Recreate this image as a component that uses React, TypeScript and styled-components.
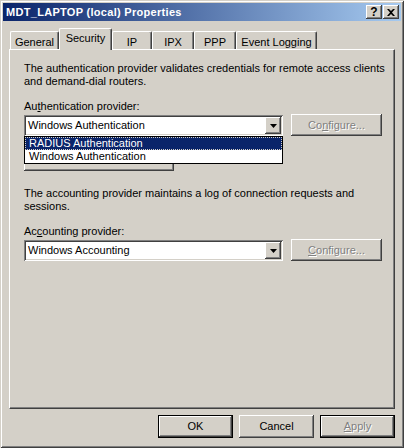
import { createGlobalStyle, styled } from "styled-components";

const GlobalStyle = createGlobalStyle`
  html, body {
    margin: 0;
    padding: 0;
    background: #d4d0c8;
  }
  body {
    font-family: "Liberation Sans", Arial, sans-serif;
    font-size: 11px;
    line-height: 13px;
    color: #000;
  }
`;

const raised = `
  box-shadow: inset -1px -1px #404040, inset 1px 1px #fff,
    inset -2px -2px #808080, inset 2px 2px #d4d0c8;
`;

const Window = styled.div`
  width: 404px;
  height: 448px;
  box-sizing: border-box;
  padding: 3px;
  background: #d4d0c8;
  box-shadow: inset 1px 1px #d4d0c8, inset -1px -1px #404040,
    inset 2px 2px #fff, inset -2px -2px #808080;
  display: flex;
  flex-direction: column;
`;

const TitleBar = styled.div`
  height: 18px;
  display: flex;
  align-items: center;
  padding: 0 2px 0 2px;
  background: linear-gradient(to right, #0a246a, #a6caf0);
  color: #fff;
  font-weight: bold;
`;

const TitleText = styled.span`
  flex: 1;
  padding-left: 1px;
  letter-spacing: 0.3px;
  white-space: nowrap;
`;

const TitleButton = styled.div`
  width: 16px;
  height: 14px;
  box-sizing: border-box;
  margin-left: 1px;
  background: #d4d0c8;
  ${raised}
  color: #000;
  display: flex;
  align-items: center;
  justify-content: center;
  font-weight: bold;
  font-size: 12px;
`;

const Content = styled.div`
  padding: 0 6px;
  display: flex;
  flex-direction: column;
`;

const TabRow = styled.div`
  margin-top: 7px;
  height: 21px;
  padding-left: 1px;
  display: flex;
  align-items: flex-end;
  position: relative;
  z-index: 1;
`;

const Tab = styled.div<{ $width: number; $selected?: boolean }>`
  width: ${(p) => p.$width}px;
  height: ${(p) => (p.$selected ? 22 : 18)}px;
  margin-bottom: ${(p) => (p.$selected ? -1 : 0)}px;
  box-sizing: border-box;
  padding-top: ${(p) => (p.$selected ? 3 : 4)}px;
  text-align: center;
  background: #d4d0c8;
  border-top: 1px solid #fff;
  border-left: 1px solid #fff;
  border-right: 1px solid #404040;
  border-radius: 2px 2px 0 0;
  box-shadow: inset -1px 0 #808080;
  white-space: nowrap;
`;

const Panel = styled.div`
  height: 360px;
  box-sizing: border-box;
  padding: 12px 0 0 14px;
  border-top: 1px solid #fff;
  border-left: 1px solid #fff;
  border-right: 1px solid #404040;
  border-bottom: 1px solid #404040;
  box-shadow: inset -1px -1px #808080;
  display: flex;
  flex-direction: column;
`;

const Description = styled.p<{ $gap?: number }>`
  margin: ${(p) => p.$gap ?? 0}px 0 0 0;
  width: 365px;
`;

const Label = styled.div<{ $gap?: number }>`
  margin-top: ${(p) => p.$gap ?? 12}px;
  margin-bottom: 1px;
`;

const Key = styled.span`
  text-decoration: underline;
`;

const FieldRow = styled.div`
  display: flex;
  align-items: flex-start;
  gap: 8px;
`;

const ComboWrap = styled.div`
  position: relative;
  margin-top: 1px;
  z-index: 2;
`;

const Combo = styled.div`
  width: 259px;
  height: 21px;
  box-sizing: border-box;
  background: #fff;
  box-shadow: inset 1px 1px #808080, inset -1px -1px #fff,
    inset 2px 2px #404040, inset -2px -2px #d4d0c8;
  display: flex;
  align-items: center;
  padding: 0 2px 0 4px;
`;

const ComboText = styled.span`
  flex: 1;
`;

const ArrowButton = styled.div`
  width: 16px;
  height: 17px;
  box-sizing: border-box;
  background: #d4d0c8;
  ${raised}
  display: flex;
  align-items: center;
  justify-content: center;
`;

const DropList = styled.div`
  position: absolute;
  top: 100%;
  left: 0;
  width: 259px;
  box-sizing: border-box;
  border: 1px solid #000;
  background: #fff;
`;

const ListItem = styled.div<{ $active?: boolean }>`
  height: 13px;
  box-sizing: border-box;
  padding-left: 3px;
  background: ${(p) => (p.$active ? "#0a246a" : "#fff")};
  color: ${(p) => (p.$active ? "#fff" : "#000")};
  border: 1px dotted ${(p) => (p.$active ? "#d4d0c8" : "transparent")};
  line-height: 11px;
  white-space: nowrap;
`;

const Button = styled.div<{
  $width: number;
  $disabled?: boolean;
  $framed?: boolean;
}>`
  width: ${(p) => p.$width}px;
  height: ${(p) => (p.$framed ? 23 : 22)}px;
  box-sizing: border-box;
  background: #d4d0c8;
  border: ${(p) => (p.$framed ? "1px solid #000" : "none")};
  ${raised}
  display: flex;
  align-items: center;
  justify-content: center;
  color: ${(p) => (p.$disabled ? "#808080" : "#000")};
  text-shadow: ${(p) => (p.$disabled ? "1px 1px 0 #fff" : "none")};
  white-space: nowrap;
`;

// mostly covered by the open drop-down list
const HiddenButton = styled(Button)`
  margin-top: 12px;
  height: 23px;
`;

const FooterButton = styled(Button)`
  height: 23px;
`;

const Footer = styled.div`
  margin-top: 6px;
  display: flex;
  justify-content: flex-end;
  gap: 6px;
`;

const tabs = [
  { label: "General", width: 49 },
  { label: "Security", width: 53, selected: true },
  { label: "IP", width: 40 },
  { label: "IPX", width: 42 },
  { label: "PPP", width: 42 },
  { label: "Event Logging", width: 81 },
];

const DownArrow = () => (
  <svg width="7" height="4" viewBox="0 0 7 4">
    <path d="M0 0h7L3.5 4z" fill="#000" />
  </svg>
);

const CloseGlyph = () => (
  <svg width="8" height="7" viewBox="0 0 8 7">
    <path
      d="M0 0h2l2 2 2-2h2L5 3.5 8 7H6L4 5 2 7H0l3-3.5z"
      fill="#000"
    />
  </svg>
);

const App = () => {
  return (
    <Window>
      <GlobalStyle />
      <TitleBar>
        <TitleText>MDT_LAPTOP (local) Properties</TitleText>
        <TitleButton>?</TitleButton>
        <TitleButton>
          <CloseGlyph />
        </TitleButton>
      </TitleBar>
      <Content>
        <TabRow>
          {tabs.map((t) => (
            <Tab key={t.label} $width={t.width} $selected={t.selected}>
              {t.label}
            </Tab>
          ))}
        </TabRow>
        <Panel>
          <Description>
            The authentication provider validates credentials for remote access
            clients and demand-dial routers.
          </Description>
          <Label>
            Au<Key>t</Key>hentication provider:
          </Label>
          <FieldRow>
            <ComboWrap>
              <Combo>
                <ComboText>Windows Authentication</ComboText>
                <ArrowButton>
                  <DownArrow />
                </ArrowButton>
              </Combo>
              <DropList>
                <ListItem $active>RADIUS Authentication</ListItem>
                <ListItem>Windows Authentication</ListItem>
              </DropList>
            </ComboWrap>
            <Button $width={91} $disabled>
              Co<Key>n</Key>figure...
            </Button>
          </FieldRow>
          <HiddenButton $width={150} />
          <Description $gap={16}>
            The accounting provider maintains a log of connection requests and
            sessions.
          </Description>
          <Label>
            Ac<Key>c</Key>ounting provider:
          </Label>
          <FieldRow>
            <ComboWrap>
              <Combo>
                <ComboText>Windows Accounting</ComboText>
                <ArrowButton>
                  <DownArrow />
                </ArrowButton>
              </Combo>
            </ComboWrap>
            <Button $width={91} $disabled>
              <Key>C</Key>onfigure...
            </Button>
          </FieldRow>
        </Panel>
        <Footer>
          <FooterButton $width={75} $framed>
            OK
          </FooterButton>
          <FooterButton $width={75}>Cancel</FooterButton>
          <FooterButton $width={75} $framed $disabled>
            <Key>A</Key>pply
          </FooterButton>
        </Footer>
      </Content>
    </Window>
  );
};

export default App;
